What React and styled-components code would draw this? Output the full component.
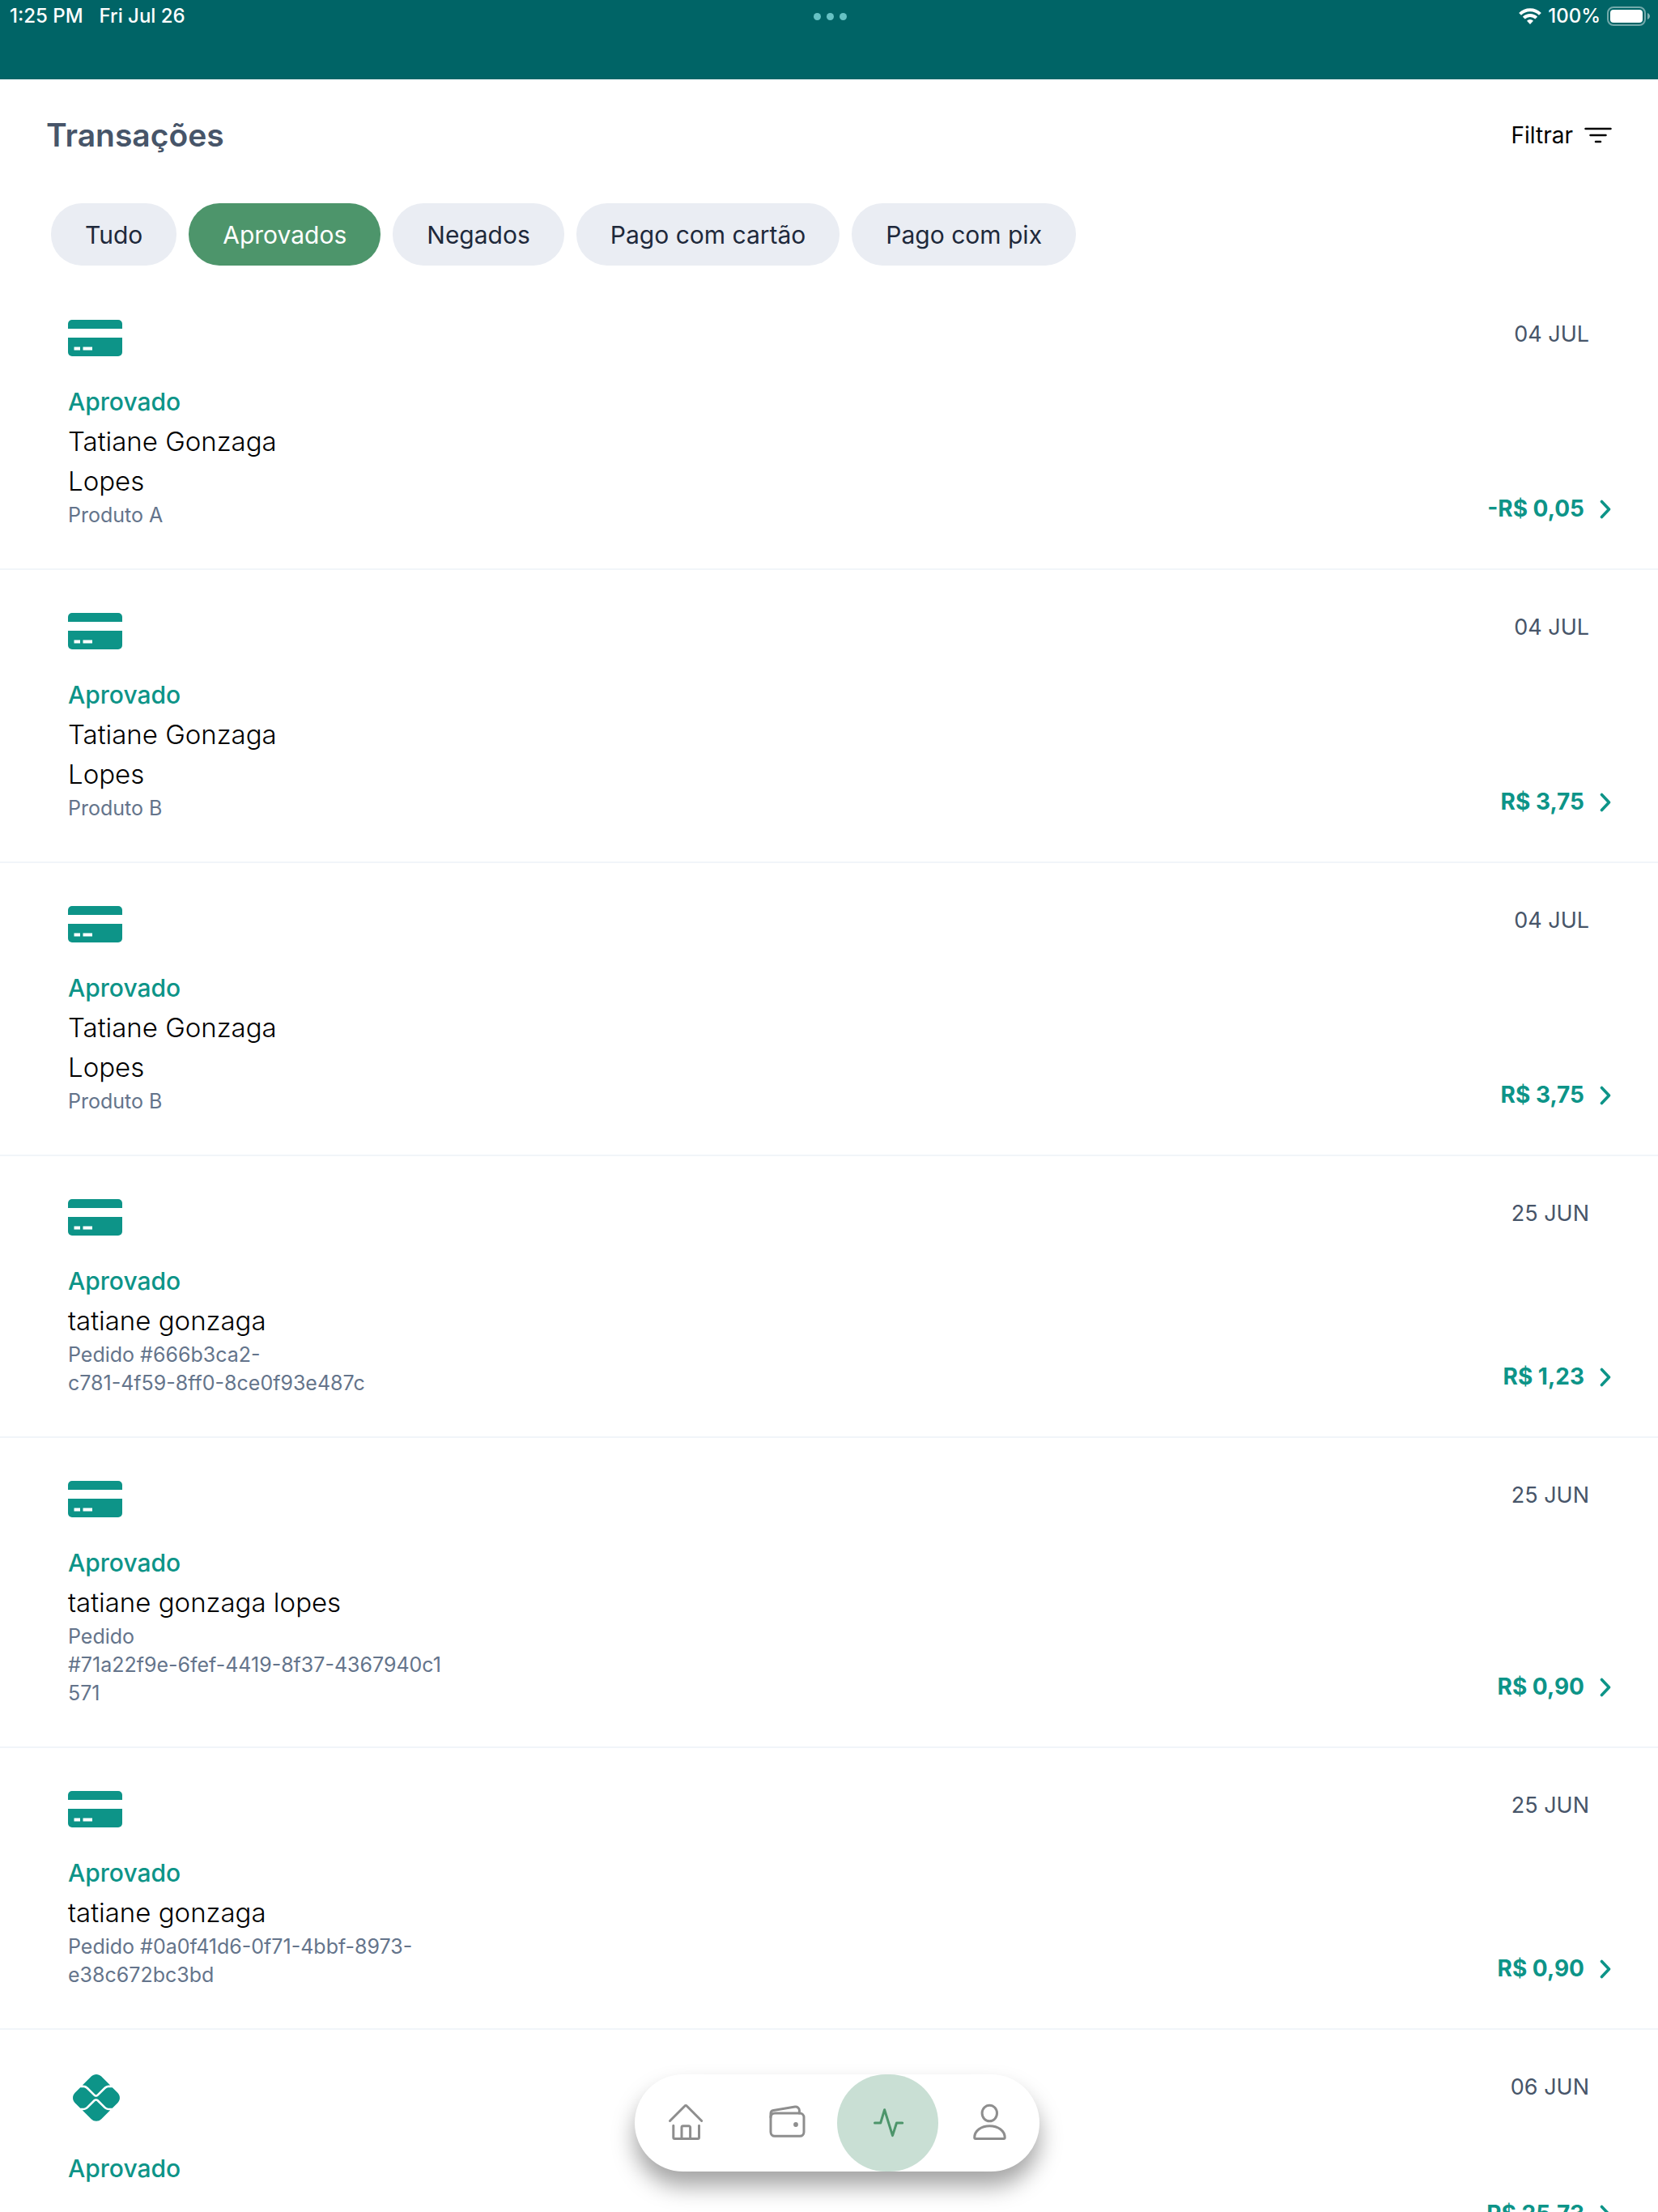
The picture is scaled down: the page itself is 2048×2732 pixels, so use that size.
import React from 'react'
import styled, { createGlobalStyle } from 'styled-components'
import { FaPix } from 'react-icons/fa6'

const theme = {
  header: '#006466',
  accent: '#0d9488',
  active: '#4d956b',
  activeSoft: '#c9dfd4',
  chip: '#eaedf3',
  border: '#f1f5f9',
  textPrimary: '#1e293b',
  textSecondary: '#475569',
  textTertiary: '#64748b',
  icon: '#8e8e8e',
}

const filters = ['Tudo', 'Aprovados', 'Negados', 'Pago com cartão', 'Pago com pix']

const transactions = [
  { id: 1, type: 'card', name: 'Tatiane Gonzaga\nLopes', description: 'Produto A', date: '04 JUL', amount: '-R$ 0,05' },
  { id: 2, type: 'card', name: 'Tatiane Gonzaga\nLopes', description: 'Produto B', date: '04 JUL', amount: 'R$ 3,75' },
  { id: 3, type: 'card', name: 'Tatiane Gonzaga\nLopes', description: 'Produto B', date: '04 JUL', amount: 'R$ 3,75' },
  {
    id: 4,
    type: 'card',
    name: 'tatiane gonzaga',
    description: 'Pedido #666b3ca2-\nc781-4f59-8ff0-8ce0f93e487c',
    date: '25 JUN',
    amount: 'R$ 1,23',
  },
  {
    id: 5,
    type: 'card',
    name: 'tatiane gonzaga lopes',
    description: 'Pedido\n#71a22f9e-6fef-4419-8f37-4367940c1\n571',
    date: '25 JUN',
    amount: 'R$ 0,90',
  },
  {
    id: 6,
    type: 'card',
    name: 'tatiane gonzaga',
    description: 'Pedido #0a0f41d6-0f71-4bbf-8973-\ne38c672bc3bd',
    date: '25 JUN',
    amount: 'R$ 0,90',
  },
  { id: 7, type: 'pix', date: '06 JUN', amount: 'R$ 25,73' },
]

const IconWifi = () => (
  <svg width="28" height="20" viewBox="0 0 28 20" fill="none" stroke="#fff" strokeWidth="4">
    <path d="M1.6 7.4a17.5 17.5 0 0 1 24.8 0" />
    <path d="M6.3 12.1a10.9 10.9 0 0 1 15.4 0" />
    <path d="M14 20l-4-4.2a5.6 5.6 0 0 1 8 0z" fill="#fff" stroke="none" />
  </svg>
)

const IconBattery = () => (
  <svg width="54" height="24" viewBox="0 0 54 24">
    <rect x="1" y="1" width="46" height="22" rx="7" fill="none" stroke="#fff" strokeOpacity="0.45" strokeWidth="2" />
    <rect x="4" y="4" width="40" height="16" rx="4" fill="#fff" />
    <path d="M50 8c2 .8 3 2.3 3 4s-1 3.2-3 4z" fill="#fff" fillOpacity="0.5" />
  </svg>
)

const IconFilter = () => (
  <svg width="34" height="20" viewBox="0 0 34 20" stroke="#000" strokeWidth="2.5" strokeLinecap="round">
    <path d="M1.5 2h31M7.5 10h19M14 18h6" />
  </svg>
)

const IconCard = () => (
  <svg width="67" height="45" viewBox="0 0 67 45" fill={theme.accent}>
    <path d="M5 0h57a5 5 0 0 1 5 5v6H0V5a5 5 0 0 1 5-5z" />
    <path d="M0 22h67v18a5 5 0 0 1-5 5H5a5 5 0 0 1-5-5z" />
    <path d="M7.5 33.5H15v4H7.5zM18.5 33.5H30v4H18.5z" fill="#fff" />
  </svg>
)

const IconChevron = () => (
  <svg width="14" height="24" viewBox="0 0 14 24" fill="none" stroke={theme.accent} strokeWidth="3.6" strokeLinecap="round" strokeLinejoin="round">
    <path d="M2.5 2.5L11.5 12L2.5 21.5" />
  </svg>
)

const NavIcon = ({ children, active }) => (
  <svg
    width="48"
    height="48"
    viewBox="0 0 48 48"
    fill="none"
    stroke={active ? theme.active : theme.icon}
    strokeWidth="3"
    strokeLinecap="round"
    strokeLinejoin="round"
  >
    {children}
  </svg>
)

const navItems = [
  {
    label: 'Início',
    drawing: (
      <>
        <path d="M4.5 21.5L22.7 3.2a1.9 1.9 0 0 1 2.8 0L43.7 21.5" />
        <path d="M8.8 27.3v14.7a1.5 1.5 0 0 0 1.5 1.5h28.7a1.5 1.5 0 0 0 1.5-1.5V27.3" />
        <path d="M19 43V29.5a1.8 1.8 0 0 1 1.8-1.8h7a1.8 1.8 0 0 1 1.8 1.8V43" />
      </>
    ),
  },
  {
    label: 'Carteira',
    drawing: (
      <>
        <rect x="4" y="12" width="41" height="28.3" rx="5" />
        <path d="M4 17v-4.5a4 4 0 0 1 3.4-3.9L34 4.1a4.6 4.6 0 0 1 5.4 4.5V12" />
        <circle cx="35" cy="26" r="2.9" fill={theme.icon} stroke="none" />
      </>
    ),
  },
  {
    label: 'Transações',
    active: true,
    drawing: <path d="M7.5 24h7.2l4.9-16.2 9.9 31.8L34.5 24h7.2" />,
  },
  {
    label: 'Perfil',
    drawing: (
      <>
        <ellipse cx="24.3" cy="12" rx="9.2" ry="9.8" />
        <path d="M5.7 42c0-8.2 8.2-14.3 18.7-14.3S43.2 33.8 43.2 42a1.4 1.4 0 0 1-1.4 1.4H7.1A1.4 1.4 0 0 1 5.7 42z" />
      </>
    ),
  },
]

const Transaction = ({ type, name, description, date, amount }) => (
  <Row>
    <Details>
      <IconContainer>
        {type === 'pix' ? <PixIcon size={58} color={theme.accent} /> : <IconCard />}
      </IconContainer>
      <Status>Aprovado</Status>
      {name && <Name>{name}</Name>}
      {description && <Description>{description}</Description>}
    </Details>
    <Summary>
      <DateLabel>{date}</DateLabel>
      <Amount href="#detalhes">
        {amount}
        <IconChevron />
      </Amount>
    </Summary>
  </Row>
)

const App = () => (
  <Screen>
    <GlobalStyle />
    <Header>
      <StatusGroup>
        <span>1:25 PM</span>
        <span>Fri Jul 26</span>
      </StatusGroup>
      <Dots>
        <Dot />
        <Dot />
        <Dot />
      </Dots>
      <StatusIcons>
        <IconWifi />
        <span>100%</span>
        <IconBattery />
      </StatusIcons>
    </Header>
    <Toolbar>
      <Title>Transações</Title>
      <FilterButton type="button">
        Filtrar
        <IconFilter />
      </FilterButton>
    </Toolbar>
    <Chips>
      {filters.map(filter => (
        <Chip key={filter} type="button" $active={filter === 'Aprovados'}>
          {filter}
        </Chip>
      ))}
    </Chips>
    <List>
      {transactions.map(transaction => (
        <Transaction key={transaction.id} {...transaction} />
      ))}
    </List>
    <NavContainer>
      <Nav>
        {navItems.map(({ label, active, drawing }) => (
          <NavButton key={label} type="button" aria-label={label} $active={active}>
            <NavIcon active={active}>{drawing}</NavIcon>
          </NavButton>
        ))}
      </Nav>
    </NavContainer>
  </Screen>
)

const GlobalStyle = createGlobalStyle`
  * {
    box-sizing: border-box;
  }

  body {
    margin: 0;
    font-family: Inter, 'Liberation Sans', sans-serif;
    background: #fff;
  }

  button {
    font-family: inherit;
    border: 0;
    cursor: pointer;
  }

  svg {
    display: block;
    flex-shrink: 0;
  }
`

const Screen = styled.div`
  position: relative;
  display: flex;
  flex-direction: column;
  height: 100vh;
  overflow: hidden;
`

const Header = styled.header`
  display: grid;
  grid-template-columns: 1fr auto 1fr;
  align-items: start;
  flex-shrink: 0;
  height: 98px;
  padding: 4px 9px 0 12px;
  background: ${theme.header};
  color: #fff;
  font-size: 24px;
  font-weight: 500;
  line-height: 32px;
`

const StatusGroup = styled.div`
  display: flex;
  gap: 20px;
`

const StatusIcons = styled.div`
  display: flex;
  align-items: center;
  justify-content: flex-end;
  gap: 8px;
`

const Dots = styled.div`
  display: flex;
  align-items: center;
  gap: 7px;
  height: 32px;
`

const Dot = styled.span`
  width: 9px;
  height: 9px;
  border-radius: 50%;
  background: #66c2c4;
`

const Toolbar = styled.div`
  display: flex;
  align-items: center;
  justify-content: space-between;
  padding: 42px 57px;
`

const Title = styled.h1`
  margin: 0;
  color: ${theme.textSecondary};
  font-size: 39px;
  font-weight: 600;
  line-height: 54px;
`

const FilterButton = styled.button`
  display: flex;
  align-items: center;
  gap: 14px;
  padding: 0;
  background: none;
  color: #000;
  font-size: 28px;
  line-height: 35px;
`

const Chips = styled.div`
  display: flex;
  gap: 15px;
  padding: 15px 63px 14px;
`

const Chip = styled.button`
  height: 77px;
  padding: 1px 42px 0;
  border-radius: 38px;
  background: ${({ $active }) => ($active ? theme.active : theme.chip)};
  color: ${({ $active }) => ($active ? '#fff' : theme.textPrimary)};
  font-size: 30px;
  line-height: 49px;
`

const List = styled.ul`
  flex: 1;
  min-height: 0;
  margin: 0;
  padding: 0;
  overflow: hidden;
  list-style: none;
`

const Row = styled.li`
  display: flex;
  justify-content: space-between;
  min-height: 303px;
  padding: 49px 58px 48px 84px;
  border-bottom: 2px solid ${theme.border};
`

const Details = styled.div`
  display: flex;
  flex-direction: column;
`

const IconContainer = styled.div`
  padding: 4px 0 32px;
`

const PixIcon = styled(FaPix)`
  margin: 2px 6px;
`

const Status = styled.strong`
  color: ${theme.accent};
  font-size: 30px;
  font-weight: 500;
  line-height: 49px;
`

const Name = styled.span`
  color: #000;
  font-size: 33px;
  font-weight: 300;
  line-height: 49px;
  white-space: pre-line;
`

const Description = styled.span`
  color: ${theme.textTertiary};
  font-size: 25px;
  line-height: 35px;
  white-space: pre-line;
`

const Summary = styled.div`
  display: flex;
  flex-direction: column;
  justify-content: space-between;
  align-items: flex-end;
`

const DateLabel = styled.time`
  padding: 4px 27px 0 0;
  color: ${theme.textSecondary};
  font-size: 27px;
  line-height: 35px;
`

const Amount = styled.a`
  display: flex;
  align-items: center;
  gap: 19px;
  padding-bottom: 8px;
  color: ${theme.accent};
  font-size: 28px;
  font-weight: 700;
  line-height: 35px;
  text-decoration: none;
`

const NavContainer = styled.div`
  position: absolute;
  right: 0;
  bottom: 50px;
  left: 0;
  display: flex;
  justify-content: center;
  padding-left: 20px;
`

const Nav = styled.nav`
  display: flex;
  border-radius: 60px;
  background: #fff;
  box-shadow: 0 18px 28px rgba(0, 0, 0, 0.36);
`

const NavButton = styled.button`
  display: flex;
  align-items: center;
  justify-content: center;
  width: 125px;
  height: 120px;
  padding: 0;
  border-radius: 60px;
  background: ${({ $active }) => ($active ? theme.activeSoft : 'transparent')};
`

export default App
